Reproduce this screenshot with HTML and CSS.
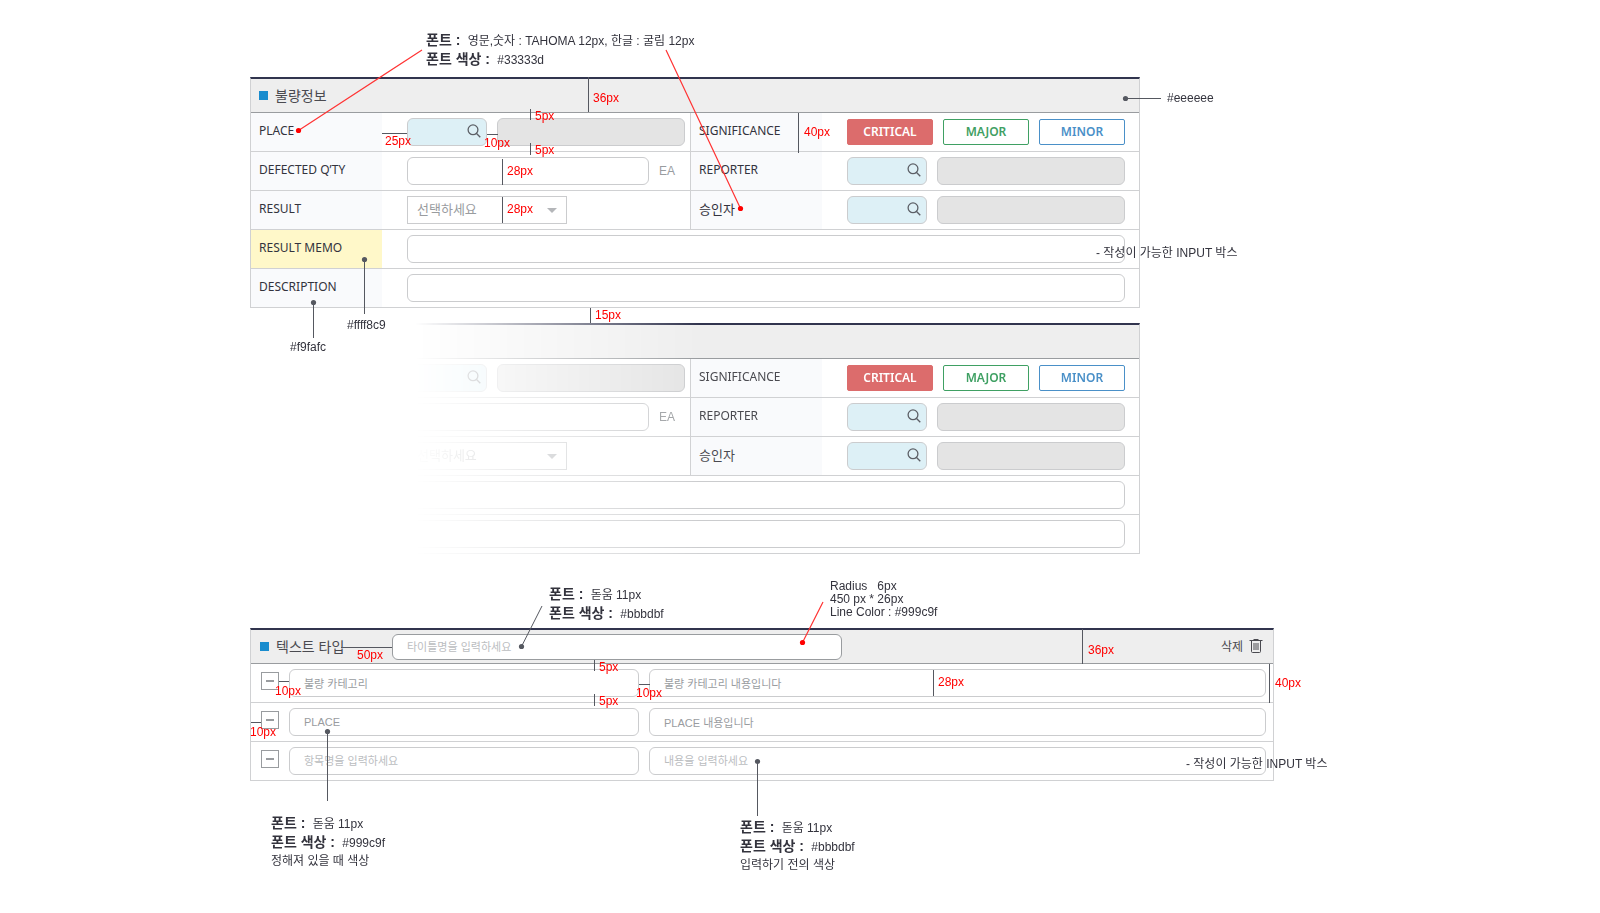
FILE: index.html
```html
<!DOCTYPE html>
<html lang="ko">
<head>
<meta charset="utf-8">
<title>Form style guide</title>
<link rel="stylesheet" href="styles.css">
</head>
<body>
<svg class="defs" aria-hidden="true">
  <symbol id="i-search" viewBox="0 0 14 14"><circle cx="6" cy="5.8" r="4.9"/><path d="M9.3 9.2 13.3 13.3"/></symbol>
  <symbol id="i-trash" viewBox="0 0 14 15"><path d="M0.5 1.5H13.5M4.5 0.5H9.5M2.5 1.5V12.5Q2.5 13.5 3.5 13.5H10.5Q11.5 13.5 11.5 12.5V1.5M5 4V11M7 4V11M9 4V11"/></symbol>
</svg>
<main class="board">

  <form class="panel">
    <header class="panel-head"><i class="mark"></i><h2 class="title">불량정보</h2></header>
    <div class="row">
      <label class="name" for="place">PLACE</label>
      <div class="cell">
        <span class="search"><input class="field" id="place" type="text"><button class="find" type="button" aria-label="PLACE"><svg><use href="#i-search"/></svg></button></span>
        <input class="field off" type="text" aria-label="PLACE" disabled>
      </div>
      <span class="name split">SIGNIFICANCE</span>
      <div class="cell last">
        <button class="level critical" type="button">CRITICAL</button>
        <button class="level major" type="button">MAJOR</button>
        <button class="level minor" type="button">MINOR</button>
      </div>
    </div>
    <div class="row">
      <label class="name" for="qty">DEFECTED Q’TY</label>
      <div class="cell"><input class="field" id="qty" type="text"><span class="unit">EA</span></div>
      <label class="name split" for="reporter">REPORTER</label>
      <div class="cell last">
        <span class="search"><input class="field" id="reporter" type="text"><button class="find" type="button" aria-label="REPORTER"><svg><use href="#i-search"/></svg></button></span>
        <input class="field off" type="text" aria-label="REPORTER" disabled>
      </div>
    </div>
    <div class="row">
      <label class="name" for="result">RESULT</label>
      <div class="cell"><span class="pick"><select id="result"><option>선택하세요</option></select></span></div>
      <label class="name split ko" for="approver">승인자</label>
      <div class="cell last">
        <span class="search"><input class="field" id="approver" type="text"><button class="find" type="button" aria-label="승인자"><svg><use href="#i-search"/></svg></button></span>
        <input class="field off" type="text" aria-label="승인자" disabled>
      </div>
    </div>
    <div class="row wide">
      <label class="name marked" for="memo">RESULT MEMO</label>
      <div class="cell last"><input class="field" id="memo" type="text"></div>
    </div>
    <div class="row wide">
      <label class="name" for="desc">DESCRIPTION</label>
      <div class="cell last"><input class="field" id="desc" type="text"></div>
    </div>
  </form>

  <form class="panel faded">
    <header class="panel-head"></header>
    <div class="row">
      <span class="name"></span>
      <div class="cell">
        <span class="search"><input class="field" type="text" aria-label="PLACE"><button class="find" type="button" aria-label="PLACE"><svg><use href="#i-search"/></svg></button></span>
        <input class="field off" type="text" aria-label="PLACE" disabled>
      </div>
      <span class="name split">SIGNIFICANCE</span>
      <div class="cell last">
        <button class="level critical" type="button">CRITICAL</button>
        <button class="level major" type="button">MAJOR</button>
        <button class="level minor" type="button">MINOR</button>
      </div>
    </div>
    <div class="row">
      <span class="name"></span>
      <div class="cell"><input class="field" type="text" aria-label="EA"><span class="unit">EA</span></div>
      <label class="name split" for="reporter2">REPORTER</label>
      <div class="cell last">
        <span class="search"><input class="field" id="reporter2" type="text"><button class="find" type="button" aria-label="REPORTER"><svg><use href="#i-search"/></svg></button></span>
        <input class="field off" type="text" aria-label="REPORTER" disabled>
      </div>
    </div>
    <div class="row">
      <span class="name"></span>
      <div class="cell"><span class="pick"><select aria-label="RESULT"><option>선택하세요</option></select></span></div>
      <label class="name split ko" for="approver2">승인자</label>
      <div class="cell last">
        <span class="search"><input class="field" id="approver2" type="text"><button class="find" type="button" aria-label="승인자"><svg><use href="#i-search"/></svg></button></span>
        <input class="field off" type="text" aria-label="승인자" disabled>
      </div>
    </div>
    <div class="row wide">
      <span class="name"></span>
      <div class="cell last"><input class="field" type="text" aria-label="RESULT MEMO"></div>
    </div>
    <div class="row wide">
      <span class="name"></span>
      <div class="cell last"><input class="field" type="text" aria-label="DESCRIPTION"></div>
    </div>
  </form>

  <form class="panel items">
    <header class="panel-head">
      <i class="mark"></i><label class="title" for="heading">텍스트 타입</label>
      <input class="field heading" id="heading" type="text" placeholder="타이틀명을 입력하세요">
      <button class="remove" type="button">삭제<svg><use href="#i-trash"/></svg></button>
    </header>
    <div class="entry">
      <button class="minus" type="button" aria-label="삭제"></button>
      <input class="field key" type="text" aria-label="항목명" value="불량 카테고리">
      <input class="field" type="text" aria-label="내용" value="불량 카테고리 내용입니다">
    </div>
    <div class="entry">
      <button class="minus" type="button" aria-label="삭제"></button>
      <input class="field key" type="text" aria-label="항목명" value="PLACE">
      <input class="field" type="text" aria-label="내용" value="PLACE 내용입니다">
    </div>
    <div class="entry">
      <button class="minus" type="button" aria-label="삭제"></button>
      <input class="field key" type="text" aria-label="항목명" placeholder="항목명을 입력하세요">
      <input class="field" type="text" aria-label="내용" placeholder="내용을 입력하세요">
    </div>
  </form>

  <svg class="marks">
    <g class="rule">
      <path d="M588.5 77V112M530.5 109V120M530.5 143V155M382 133.5H407M487 134.5H498M502.5 159V185M502.5 197V223M798.5 113V153M1125 98.5H1161M364.5 260V314M313.5 303V338M590.5 308V323"/>
      <path d="M341 647.5H392M279 681.5H289M594.5 660V671M594.5 694V706M639 684.5H650M251 722.5H261M933.5 670V696M1082.5 629V664M1269.5 664V703M327.5 732V801M757.5 762V816M542 606 521.5 646.5"/>
    </g>
    <g class="dot">
      <circle cx="1125.5" cy="98.5" r="2.6"/><circle cx="364.5" cy="259.5" r="2.6"/><circle cx="313.5" cy="302.5" r="2.6"/>
      <circle cx="521.5" cy="646.5" r="2.6"/><circle cx="327.5" cy="731.5" r="2.6"/><circle cx="757.5" cy="761.5" r="2.6"/>
    </g>
    <path class="lead" d="M422 50 298.5 130.5M666 50 740.5 208.5M823 602 802.5 642.5"/>
    <g class="lead-dot"><circle cx="298.5" cy="130.5" r="2.6"/><circle cx="740.5" cy="208.5" r="2.6"/><circle cx="802.5" cy="642.5" r="2.6"/></g>
    <g class="size">
      <text x="593" y="102">36px</text><text x="535" y="120">5px</text><text x="535" y="154">5px</text>
      <text x="385" y="145">25px</text><text x="484" y="147">10px</text>
      <text x="507" y="175">28px</text><text x="507" y="213">28px</text><text x="804" y="136">40px</text><text x="595" y="319">15px</text>
      <text x="357" y="659">50px</text><text x="275" y="695">10px</text><text x="599" y="671">5px</text><text x="599" y="705">5px</text>
      <text x="636" y="697">10px</text><text x="250" y="736">10px</text><text x="938" y="686">28px</text><text x="1088" y="654">36px</text><text x="1275" y="687">40px</text>
    </g>
    <g class="hex">
      <text x="1167" y="102">#eeeeee</text><text x="347" y="329">#ffff8c9</text><text x="290" y="351">#f9fafc</text>
    </g>
  </svg>

  <p class="note at-font"><b>폰트 :</b> 영문,숫자 : TAHOMA 12px, 한글 : 굴림 12px<br><b>폰트 색상 :</b> #33333d</p>
  <p class="note at-memo">- 작성이 가능한 INPUT 박스</p>
  <p class="note at-heading"><b>폰트 :</b> 돋움 11px<br><b>폰트 색상 :</b> #bbbdbf</p>
  <p class="note at-radius">Radius &nbsp; 6px<br>450 px * 26px<br>Line Color : #999c9f</p>
  <p class="note at-entry">- 작성이 가능한 INPUT 박스</p>
  <p class="note at-filled"><b>폰트 :</b> 돋움 11px<br><b>폰트 색상 :</b> #999c9f<br>정해져 있을 때 색상</p>
  <p class="note at-empty"><b>폰트 :</b> 돋움 11px<br><b>폰트 색상 :</b> #bbbdbf<br>입력하기 전의 색상</p>
</main>
</body>
</html>
```
FILE: styles.css
```css
* { box-sizing: border-box; }
body {
  margin: 0;
  background: #fff;
  color: #33333d;
  font: 12px/18px "Liberation Sans", "Noto Sans CJK KR", sans-serif;
}
input, select, button { font: inherit; margin: 0; }
button { padding: 0; border: 0; background: none; color: inherit; }
.defs { position: absolute; width: 0; height: 0; }
.board { position: relative; padding: 77px 16px 100px 250px; }

.panel {
  max-width: 890px;
  border: 1px solid #d0d1d3;
  border-top: 2px solid #31344e;
  border-bottom: 0;
}
.faded {
  margin-top: 15px;
  -webkit-mask-image: linear-gradient(to right, transparent 165px, #000 450px);
  mask-image: linear-gradient(to right, transparent 165px, #000 450px);
}
.items { max-width: 1024px; margin-top: 74px; }
.panel-head {
  display: flex;
  align-items: center;
  height: 34px;
  padding: 0 10px 0 8px;
  background: #eee;
  border-bottom: 1px solid #999c9f;
}
.mark { width: 9px; height: 9px; margin-right: 7px; background: #198cce; }
.title { margin: 0; font-size: 14px; font-weight: 400; color: #4a4a50; white-space: nowrap; }
.items .mark { margin-left: 1px; }
.items .title { width: 66px; margin-right: 50px; }

.row {
  display: grid;
  grid-template-columns: 131px minmax(0, 308fr) 132px minmax(0, 317fr);
  border-bottom: 1px solid #d0d1d3;
}
.row.wide { grid-template-columns: 131px minmax(0, 1fr); }
.name {
  display: flex;
  align-items: center;
  padding: 0 8px 2px;
  background: #f9fafc;
  font-family: "Noto Sans", "Noto Sans CJK KR", sans-serif;
}
.name.split { border-left: 1px solid #d0d1d3; }
.name.marked { background: #fff8c9; }
.name.ko { font-size: 13px; }
.faded .name { color: #4a4a50; }
.cell { display: flex; align-items: center; gap: 10px; padding: 5px 5px 5px 25px; }
.cell.last { padding-right: 14px; }

.field {
  flex: 1;
  min-width: 0;
  width: 100%;
  height: 28px;
  padding: 0 14px;
  border: 1px solid #cbccce;
  border-radius: 6px;
  background: #fff;
  color: #999c9f;
  font-size: 11px;
}
.field::placeholder { color: #bbbdbf; opacity: 1; }
.field.off { background: #e4e4e4; }
.search { position: relative; flex: none; display: flex; width: 80px; }
.search .field { background: #ddf0f6; padding-right: 26px; }
.find { position: absolute; top: 6px; right: 6px; width: 14px; height: 14px; }
.find svg { display: block; width: 14px; height: 14px; fill: none; stroke: #5c5f66; stroke-width: 1.3; }
.unit { width: 26px; color: #999c9f; }
.pick { position: relative; width: 160px; height: 28px; }
.pick::after {
  content: "";
  position: absolute;
  top: 12px;
  right: 10px;
  border: 5px solid transparent;
  border-top-color: #b4b6b9;
  border-bottom: 0;
  pointer-events: none;
}
.pick select {
  width: 100%;
  height: 100%;
  padding: 0 9px;
  border: 1px solid #cbccce;
  border-radius: 0;
  background: #fff;
  color: #999c9f;
  font-size: 13px;
  appearance: none;
}
.level {
  flex: 1;
  height: 26px;
  border: 1px solid;
  border-radius: 2px;
  background: #fff;
  font-family: "Noto Sans", sans-serif;
  font-weight: 600;
}
.critical { background: #dc6c6c; border-color: #dc6c6c; color: #fff; }
.major { color: #3fa063; }
.minor { color: #4a90c8; }

.items .heading { flex: 0 1 450px; height: 26px; border-color: #999c9f; }
.remove { display: flex; align-items: center; gap: 6px; margin-left: auto; color: #4a4a50; }
.remove svg { width: 14px; height: 15px; fill: none; stroke: #4a4a50; }
.entry {
  display: flex;
  align-items: center;
  gap: 10px;
  padding: 5px 7px 5px 10px;
  border-bottom: 1px solid #d0d1d3;
}
.entry .key { flex: 0 1 350px; }
.minus {
  flex: none;
  display: grid;
  place-items: center;
  width: 18px;
  height: 18px;
  margin-bottom: 4px;
  border: 1px solid #999c9f;
  background: #fff;
}
.minus::before { content: ""; width: 8px; height: 2px; background: #999c9f; }

.marks { position: absolute; top: 0; left: 0; width: 100%; height: 100%; pointer-events: none; }
.rule { fill: none; stroke: #555860; }
.dot { fill: #555860; }
.lead { fill: none; stroke: #f33; stroke-width: 1.2; }
.lead-dot, .size { fill: #f00; }
.hex { fill: #33333d; }
.note { position: absolute; margin: 0; white-space: nowrap; }
.note b { margin-right: 4px; font-size: 14px; }
.at-font { left: 426px; top: 31px; }
.at-memo { left: 1096px; top: 244px; }
.at-heading { left: 549px; top: 585px; }
.at-radius { left: 830px; top: 580px; line-height: 13px; }
.at-entry { left: 1186px; top: 755px; }
.at-filled { left: 271px; top: 814px; }
.at-empty { left: 740px; top: 818px; }
```
